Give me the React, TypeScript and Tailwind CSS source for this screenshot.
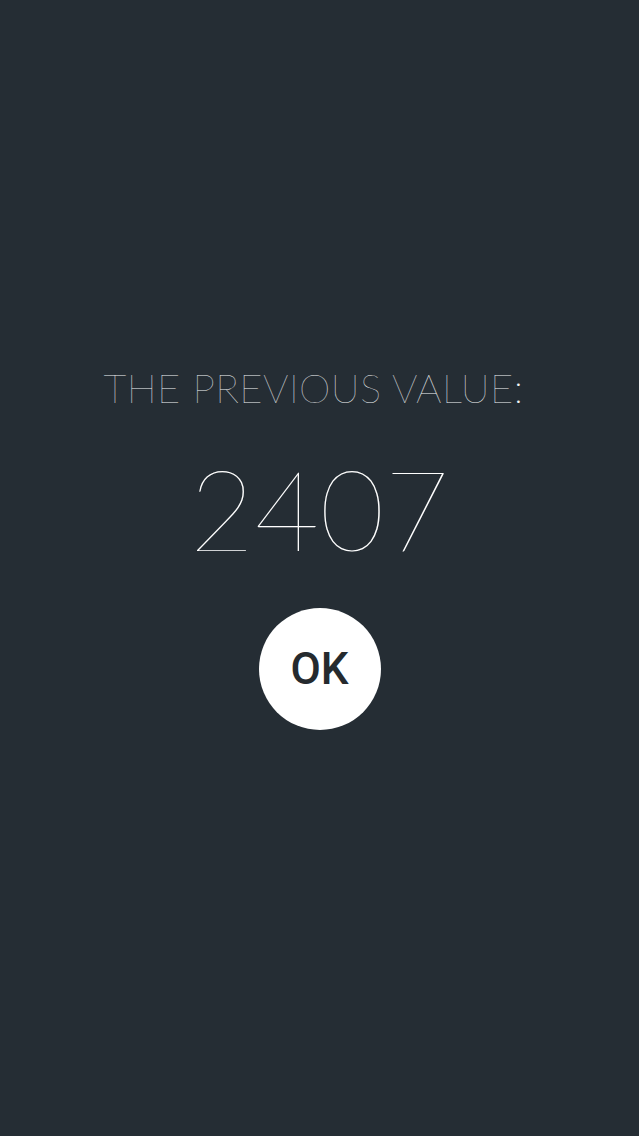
export default function App() {
  return (
    <div className="min-h-screen bg-[#252d34] flex flex-col items-center justify-center pb-[39px] text-white antialiased" style={{ fontFamily: 'Lato, "Liberation Sans", sans-serif' }}>
      <p className="pr-[12px] text-[40px] leading-none font-thin tracking-[0.4px] text-[#f2f4f5]">THE PREVIOUS VALUE:</p>
      <p className="mt-[44px] text-[112px] leading-none font-thin">2407</p>
      <button className="mt-[44px] w-[122px] h-[122px] rounded-full bg-white flex items-center justify-center">
        <span className="text-[44px] font-medium text-[#252a2e]" style={{ fontFamily: 'Roboto, "Liberation Sans", sans-serif' }}>OK</span>
      </button>
    </div>
  );
}
